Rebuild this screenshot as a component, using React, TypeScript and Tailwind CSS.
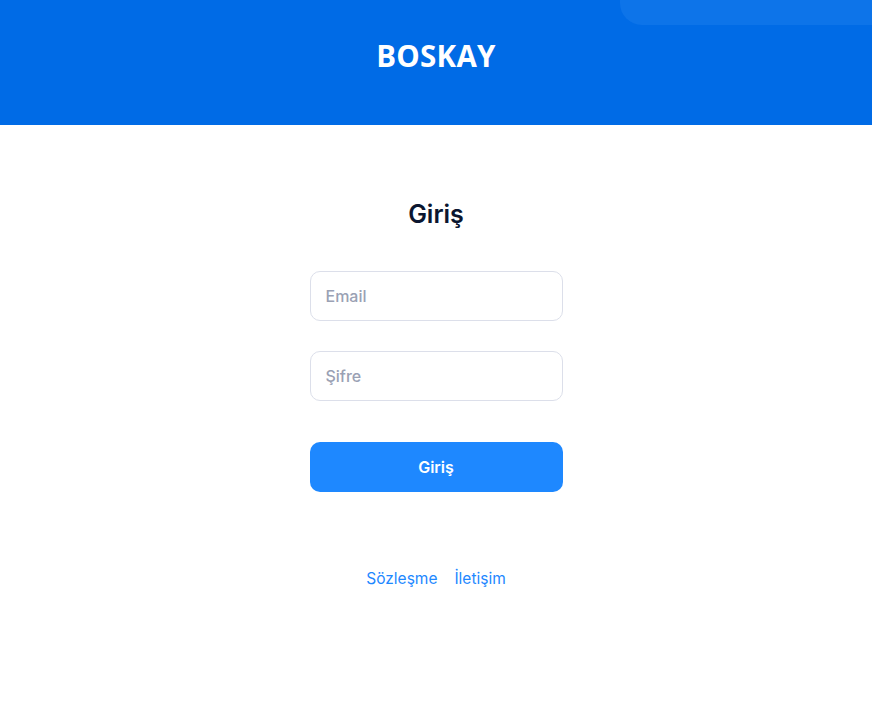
export default function App() {
  return (
    <main className="min-h-screen bg-white font-['Inter',sans-serif]">
      {/* Header */}
      <header className="relative h-[125px] overflow-hidden bg-[#006be6] flex items-center justify-center">
        <div className="pointer-events-none absolute -top-[40px] left-[620px] w-[300px] h-[65px] rounded-bl-[22px] bg-[#0d74e9]" />
        <h1 className="relative -mt-[12px] text-[29.5px] font-bold tracking-[0.01em] text-white font-['Open_Sans',sans-serif]">BOSKAY</h1>
      </header>

      {/* Form */}
      <section className="flex flex-col items-center pt-[74px]">
        <h2 className="text-[25px] font-semibold text-[#0b1630] leading-[30px]">Giriş</h2>
        <form className="mt-[42px] w-[253px] flex flex-col">
          <input
            type="email"
            placeholder="Email"
            className="h-[50px] rounded-[10px] border border-[#dcdfea] px-[15px] text-[16px] font-medium text-gray-900 placeholder:text-[#9aa1b4] focus:outline-none"
          />
          <input
            type="password"
            placeholder="Şifre"
            className="mt-[30px] h-[50px] rounded-[10px] border border-[#dcdfea] px-[15px] text-[16px] font-medium text-gray-900 placeholder:text-[#9aa1b4] focus:outline-none"
          />
          <button
            type="button"
            className="mt-[41px] h-[50px] rounded-[10px] bg-[#1e88ff] text-[16px] font-semibold text-white"
          >
            Giriş
          </button>
        </form>

        <nav className="mt-[75px] flex gap-[17px] text-[15.5px] text-[#1e88ff]">
          <a href="#">Sözleşme</a>
          <a href="#">İletişim</a>
        </nav>
      </section>
    </main>
  )
}
